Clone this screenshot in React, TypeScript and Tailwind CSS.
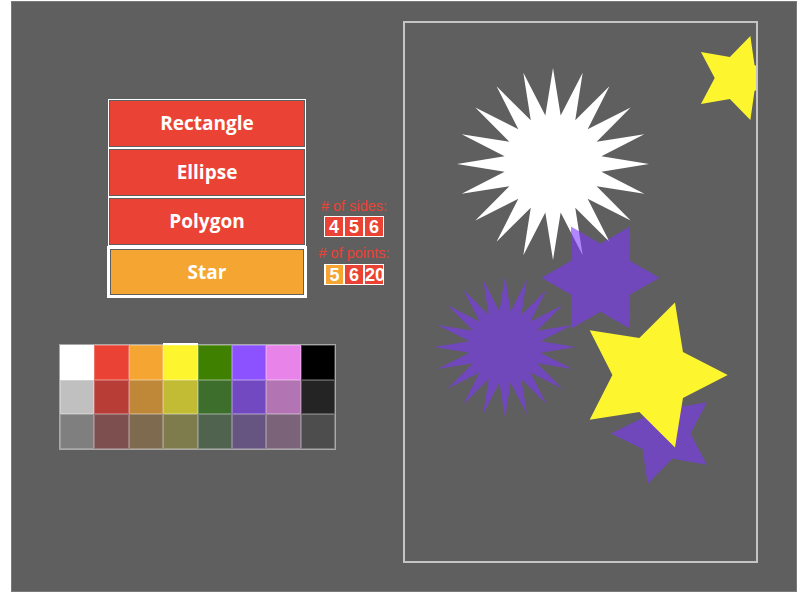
import React from "react";

const OX = 405;
const OY = 23;

function starPoints(cx: number, cy: number, R: number, r: number, n: number, rot: number) {
  const pts: string[] = [];
  for (let i = 0; i < 2 * n; i++) {
    const a = ((rot + (i * 180) / n) * Math.PI) / 180;
    const rad = i % 2 === 0 ? R : r;
    pts.push(`${(cx + rad * Math.cos(a) - OX).toFixed(2)},${(cy + rad * Math.sin(a) - OY).toFixed(2)}`);
  }
  return pts.join(" ");
}

const palette = [
  ["#ffffff", "#ea4335", "#f4a532", "#fdf62e", "#3f8000", "#8c52ff", "#e883ea", "#000000"],
  ["#c0c0c0", "#b83d37", "#bf8838", "#c2bc35", "#3e6e2c", "#7249c0", "#b374b3", "#242424"],
  ["#7f7f7f", "#7d4f4e", "#7d6a4f", "#7e7c4d", "#4f634e", "#655580", "#7b6479", "#4d4d4d"],
];

function RedButton({ label }: { label: string }) {
  return (
    <div className="mx-px border border-white p-px">
      <div className="flex h-[45px] items-center justify-center bg-[#ea4335] text-[19px] font-bold text-white [font-family:'Open_Sans',sans-serif]">
        {label}
      </div>
    </div>
  );
}

function NumBox({ v, active, left }: { v: string; active?: boolean; left?: boolean }) {
  return (
    <div
      className={`flex h-[21px] w-[20px] items-center overflow-hidden border border-white text-[18px] font-bold leading-none text-white [font-family:'Liberation_Sans',sans-serif] ${
        active ? "bg-[#f4a532] border-l-2" : "bg-[#ea4335]"
      } ${left ? "justify-start pl-0" : "justify-center"}`}
    >
      {v}
    </div>
  );
}

export default function App() {
  return (
    <div className="h-[605px] w-[800px] bg-white">
      <div className="ml-[11px] mt-[1px] flex h-[591px] w-[786px] items-start border border-[#7a7a7a] bg-[#5f5f5f]">
        {/* left column */}
        <div className="flex w-[391px] flex-col">
          <div className="ml-[95px] mt-[97px] flex items-start">
            <div className="flex w-[200px] flex-col">
              <RedButton label="Rectangle" />
              <RedButton label="Ellipse" />
              <RedButton label="Polygon" />
              <div className="border-[3px] border-white p-px">
                <div className="flex h-[44px] items-center justify-center bg-[#f4a532] text-[19px] font-bold text-white [font-family:'Open_Sans',sans-serif]">
                  Star
                </div>
              </div>
            </div>
            <div className="ml-[5px] mt-[99px] flex w-[84px] flex-col items-center text-[14.5px] leading-[17px] text-[#ea4335] [font-family:'Liberation_Sans',sans-serif]">
              <div>{"# of sides:"}</div>
              <div className="mt-[1px] flex">
                <NumBox v="4" />
                <NumBox v="5" />
                <NumBox v="6" />
              </div>
              <div className="mt-[8px]">{"# of points:"}</div>
              <div className="mt-[2px] flex">
                <NumBox v="5" active />
                <NumBox v="6" />
                <NumBox v="20" left />
              </div>
            </div>
          </div>

          <div className="ml-[47px] mt-[46px] w-[277px] border border-[#a8a8a8]">
            {palette.map((row, ri) => (
              <div key={ri} className="grid grid-cols-8">
                {row.map((c, ci) => (
                  <div
                    key={ci}
                    className="relative h-[34.7px] border border-[#ffffff40]"
                    style={{ backgroundColor: c }}
                  >
                    {ri === 0 && ci === 3 && (
                      <div className="absolute -left-px -right-px -top-[3px] h-[2px] bg-white" />
                    )}
                  </div>
                ))}
              </div>
            ))}
          </div>
        </div>

        {/* canvas */}
        <div className="mt-[19px] h-[542px] w-[355px] overflow-hidden border-2 border-[#c4c4c4]">
          <svg width="351" height="538" viewBox="0 0 351 538" className="block">
            <polygon points={starPoints(553, 164, 96, 49, 20, -90)} fill="#ffffff" />
            <polygon points={starPoints(736.7, 78, 44.2, 22, 5, 0)} fill="#fdf62e" />
            <polygon points={starPoints(505, 347, 71, 36, 20, -90)} fill="#7b39f8" fillOpacity={0.6} />
            <polygon points={starPoints(600.5, 277.7, 59, 34, 6, 0)} fill="#7b39f8" fillOpacity={0.6} />
            <polygon points={starPoints(664, 433.5, 53, 26.5, 5, 180)} fill="#7b39f8" fillOpacity={0.6} />
            <polygon points={starPoints(651.4, 375, 76.3, 39, 5, 0)} fill="#fdf62e" />
          </svg>
        </div>
      </div>
    </div>
  );
}
